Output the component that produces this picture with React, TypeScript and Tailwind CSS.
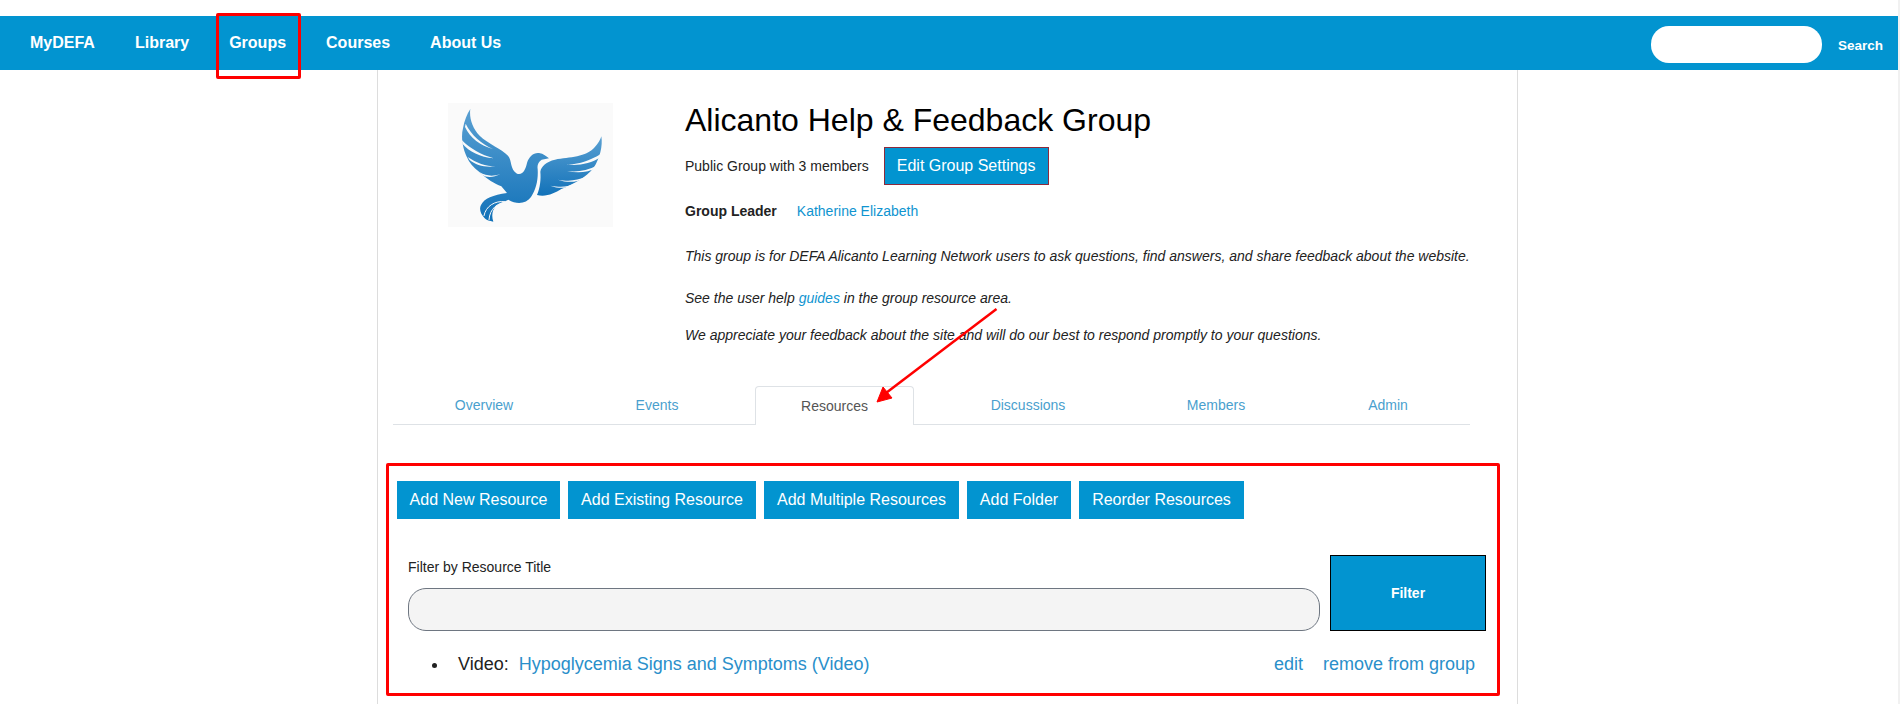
const navLinks = ["MyDEFA", "Library", "Groups", "Courses", "About Us"];
const actions = [
  { label: "Add New Resource", width: "w-[163px]" },
  { label: "Add Existing Resource", width: "w-[188px]" },
  { label: "Add Multiple Resources", width: "w-[195px]" },
  { label: "Add Folder", width: "w-[104px]" },
  { label: "Reorder Resources", width: "w-[165px]" },
];

const BirdLogo = () => (
  <div className="w-[165px] h-[124px] bg-[#fafafa] shrink-0">
    <svg viewBox="55 42 495 372" className="w-full h-full">
      <defs>
        <linearGradient id="bird" x1="0" y1="0" x2="0" y2="1">
          <stop offset="0" stopColor="#5aa0d2" />
          <stop offset="1" stopColor="#1272b9" />
        </linearGradient>
      </defs>
      {/* left wing and body */}
      <path
        fill="url(#bird)"
        d="M122 60C118 85 128 118 150 140C175 165 215 178 235 200C248 215 240 240 262 254C280 260 288 240 292 222C298 202 312 190 328 192C342 194 350 202 358 208L336 212C326 218 322 228 324 240C326 270 320 300 304 324C290 344 262 348 236 332C225 338 208 342 198 352C186 366 186 384 191 398C180 396 170 394 165 388C152 374 148 360 154 348C164 328 190 318 232 312L215 292C195 285 172 270 150 250C130 235 118 220 112 205C102 185 92 150 100 118C104 95 112 75 122 60Z"
      />
      {/* right wing */}
      <path
        fill="url(#bird)"
        d="M332 248C334 232 350 218 376 212C420 204 470 205 495 175C505 165 512 152 515 142C520 170 510 210 492 236C470 265 430 285 395 300C375 312 350 325 322 318C332 295 334 270 332 248Z"
      />
      {/* feather slits */}
      <path
        fill="#fafafa"
        d="M108 104C125 138 155 165 190 180C152 170 122 148 106 114ZM97 154C120 178 155 198 192 208C152 204 118 188 98 164ZM114 204C140 222 168 232 198 232C165 236 138 228 120 213ZM150 250C170 262 190 262 212 256C190 266 170 266 157 257ZM512 196C480 215 445 228 410 226C445 232 485 222 510 206ZM506 228C470 245 445 250 412 246C445 254 475 250 501 237ZM472 262C440 275 420 278 385 272C415 282 440 280 464 269ZM438 282C410 295 395 296 362 290C390 300 410 298 430 288Z"
      />
      {/* tail */}
      <path
        fill="none"
        stroke="#fafafa"
        strokeWidth="3"
        strokeLinecap="round"
        d="M226 338C195 334 168 352 163 380M226 340C205 342 180 358 178 392"
      />
    </svg>
  </div>
);

export default function App() {
  return (
    <div className="flex h-[704px] overflow-hidden bg-white text-[#222] font-['Liberation_Sans',Arial,sans-serif]">
      <div className="relative w-[1898px] pt-4">
        <nav className="flex items-center justify-between h-[54px] pl-[30px] pr-[15px] bg-[#0294d0] text-white">
          <div className="flex gap-10 text-base font-bold">
            {navLinks.map((link) => (
              <a key={link}>{link}</a>
            ))}
          </div>
          <div className="flex items-center gap-4">
            <input className="w-[171px] h-[37px] mt-[3px] rounded-[18px] bg-white" />
            <span className="mt-[6px] text-[13.5px] font-bold">Search</span>
          </div>
        </nav>

        <div className="ml-[377px] w-[1141px] h-[634px] border-x border-[#dddddd]">
          <div className="flex gap-[72px] pl-[70px]">
            <div className="pt-[33px]">
              <BirdLogo />
            </div>
            <div className="pt-8">
              <h1 className="text-[32px] leading-9 text-black">Alicanto Help &amp; Feedback Group</h1>
              <div className="flex items-center gap-[15px] mt-[9px] text-sm">
                <span>Public Group with 3 members</span>
                <a className="flex items-center justify-center w-[165px] h-[38px] text-base text-white bg-[#0294d0] border border-[#8c2a3c]">
                  Edit Group Settings
                </a>
              </div>
              <div className="flex gap-5 mt-4 text-sm leading-5">
                <b>Group Leader</b>
                <a className="text-[#0f94d0]">Katherine Elizabeth</a>
              </div>
              <p className="mt-[25px] text-sm leading-5 italic">
                This group is for DEFA Alicanto Learning Network users to ask questions, find answers, and share feedback about the website.
              </p>
              <p className="mt-[22px] text-sm leading-5 italic">
                See the user help <a className="text-[#0f94d0]">guides</a> in the group resource area.
              </p>
              <p className="mt-[17px] text-sm leading-5 italic">
                We appreciate your feedback about the site and will do our best to respond promptly to your questions.
              </p>
            </div>
          </div>

          <div className="flex ml-[15px] mt-[41px] w-[1077px] h-[39px] text-sm text-[#4a9fce]">
            <a className="flex items-center justify-center w-[182px] border-b border-[#dee2e6]">Overview</a>
            <a className="flex items-center justify-center w-[180px] pr-4 border-b border-[#dee2e6]">Events</a>
            <a className="flex items-center justify-center w-[159px] pb-px rounded-t border border-b-0 border-[#dee2e6] text-[#555]">Resources</a>
            <a className="flex items-center justify-center w-[228px] border-b border-[#dee2e6]">Discussions</a>
            <a className="flex items-center justify-center w-[148px] border-b border-[#dee2e6]">Members</a>
            <a className="flex items-center justify-center w-[180px] pl-4 border-b border-[#dee2e6]">Admin</a>
          </div>

          <section className="ml-2 mt-[38px] w-[1114px] h-[233px] pt-[15px] border-[3px] border-[#ff0000] rounded-[2px]">
            <div className="flex gap-2 pl-2">
              {actions.map((action) => (
                <a key={action.label} className={`flex items-center justify-center h-[38px] text-base text-white bg-[#0294d0] ${action.width}`}>
                  {action.label}
                </a>
              ))}
            </div>
            <div className="flex items-end gap-[10px] mt-9 pl-[19px]">
              <div className="w-[912px]">
                <label className="block mb-[11px] text-sm leading-5">Filter by Resource Title</label>
                <input className="block w-full h-[43px] rounded-[18px] bg-[#f4f4f4] border border-[#6e7681]" />
              </div>
              <button className="w-[156px] h-[76px] text-sm font-bold text-white bg-[#0294d0] border border-black">
                Filter
              </button>
            </div>
            <ul className="mt-5 pl-[43px] pr-[22px] text-lg leading-[26px]">
              <li className="flex items-center">
                <span className="w-[5px] h-[5px] mr-[21px] mt-[2px] rounded-full bg-[#222]" />
                <div className="flex flex-1 justify-between">
                  <span>
                    Video:<a className="ml-[10px] text-[#2a8fca]">Hypoglycemia Signs and Symptoms (Video)</a>
                  </span>
                  <span className="flex gap-5 text-[#2a8fca]">
                    <a>edit</a>
                    <a>remove from group</a>
                  </span>
                </div>
              </li>
            </ul>
          </section>
        </div>

        {/* annotations drawn over the page */}
        <div className="absolute left-[216px] top-[13px] w-[85px] h-[66px] border-[3px] border-[#ff0000] rounded-[2px]" />
        <svg className="absolute left-0 top-0 pointer-events-none" width="1898" height="704">
          <path d="M996.5 309L886 393" stroke="#ff0000" strokeWidth="2.5" fill="none" />
          <path d="M877 402L883 387L892 398Z" fill="#ff0000" stroke="#ff0000" />
        </svg>
      </div>
      <div className="w-[2px] bg-[#f1f1f1]" />
    </div>
  );
}
